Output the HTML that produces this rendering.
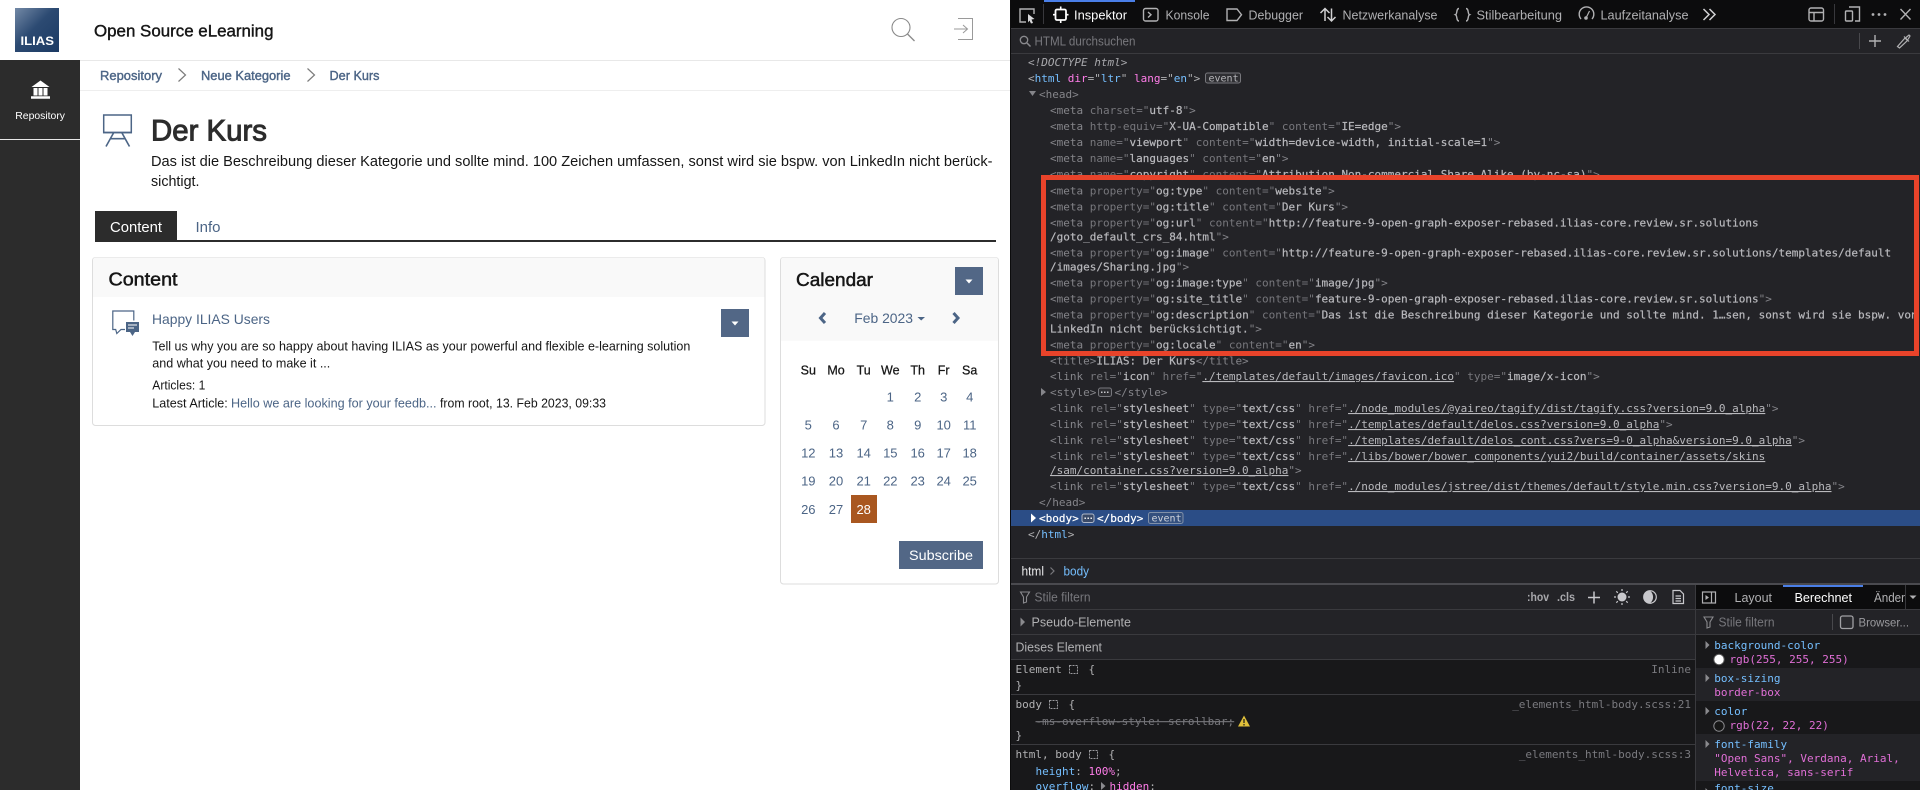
<!DOCTYPE html>
<html lang="en"><head><meta charset="utf-8"><title>ILIAS: Der Kurs</title>
<style>
html,body{margin:0;padding:0;width:1920px;height:790px;overflow:hidden;background:#fff}
svg{display:block;position:absolute;left:0;top:0}
text{font-family:"Liberation Sans",sans-serif;white-space:pre}
.s{fill:#161616}
.sb{stroke-width:.4;stroke:currentColor}
.l{fill:#4c6586}
.m{font-family:"DejaVu Sans Mono","Liberation Mono",monospace;font-size:11px;fill:#85858a}
.t{fill:#85858a}.a{fill:#77777c}.v{fill:#b9b9bd;stroke:#b9b9bd;stroke-width:.2}.u{fill:#b9b9bd;text-decoration:underline}
.blue{fill:#75bfff}.pink{fill:#ff7de9}.pk{fill:#e06fd6}.w{fill:#e8e8ea}.g{fill:#b1b1b3}.gd{fill:#7a7a7f}
.ui{font-size:12.5px;fill:#b1b1b3}
.d{font-size:13px;fill:#4c6586;text-anchor:middle}
.h{font-size:12.5px;fill:#161616;text-anchor:middle;stroke:#161616;stroke-width:.25}
.ic{fill:none;stroke:#b1b1b3;stroke-width:1.4}
</style></head>
<body>
<svg width="1920" height="790" viewBox="0 0 1920 790" xmlns="http://www.w3.org/2000/svg">
<defs><linearGradient id="lg" x1="0" y1="0" x2="1" y2="1"><stop offset="0" stop-color="#7389a6"/><stop offset=".45" stop-color="#2c4a72"/><stop offset="1" stop-color="#1b3a63"/></linearGradient></defs>
<rect width="1920" height="790" fill="#fff"/>

<!-- Header -->
<rect x="15" y="8" width="44" height="44" fill="url(#lg)"/>
<text x="20.5" y="45" font-size="11.5" font-weight="700" fill="#fff" textLength="33.5" lengthAdjust="spacingAndGlyphs">ILIAS</text>
<text x="94" y="36.5" font-size="16.5" class="s sb" color="#161616" textLength="179.5" lengthAdjust="spacingAndGlyphs">Open Source eLearning</text>
<circle cx="901" cy="27.5" r="9" fill="none" stroke="#8a8a8a" stroke-width="1.1"/>
<path d="M907.5 34 L914.5 41" fill="none" stroke="#8a8a8a" stroke-width="1.3"/>
<path d="M958 18.5 H972.5 V39.5 H958 M954 29 H967 M963 25 L967.5 29 L963 33" fill="none" stroke="#9a9a9a" stroke-width="1"/>
<rect x="0" y="60" width="1010" height="1" fill="#e8e8e8"/>
<rect x="80" y="90" width="930" height="1" fill="#eeeeee"/>

<!-- Sidebar -->
<rect x="0" y="60" width="80" height="730" fill="#2c2c2c"/>
<rect x="0" y="139" width="80" height="1" fill="#e8e8e8"/>
<path d="M31.5 87 L40.5 80.5 L49.5 87 Z" fill="#fff"/>
<path d="M33.5 88 h4 v7.5 h-4z M38.5 88 h4 v7.5 h-4z M43.5 88 h4 v7.5 h-4z M31 96.3 h19 v2.4 h-19z" fill="#fff"/>
<text x="15.3" y="119" font-size="10.5" fill="#fff" textLength="49.7" lengthAdjust="spacingAndGlyphs">Repository</text>

<!-- Breadcrumb -->
<text x="100" y="80" font-size="13" class="l sb" color="#4c6586" textLength="62" lengthAdjust="spacingAndGlyphs">Repository</text>
<path d="M178.5 68.5 L185.5 75 L178.5 81.5" fill="none" stroke="#7c7c7c" stroke-width="1.2"/>
<text x="201" y="80" font-size="13" class="l sb" color="#4c6586" textLength="89.5" lengthAdjust="spacingAndGlyphs">Neue Kategorie</text>
<path d="M307.5 68.5 L314.5 75 L307.5 81.5" fill="none" stroke="#7c7c7c" stroke-width="1.2"/>
<text x="329.5" y="80" font-size="13" class="l sb" color="#4c6586" textLength="50" lengthAdjust="spacingAndGlyphs">Der Kurs</text>

<!-- Title -->
<path d="M103.7 115 H131.3 V132.5 H103.7 Z" fill="none" stroke="#4c6586" stroke-width="1.5"/>
<path d="M103 132.6 H132 M113.5 133 L106 146.5 M122 133 L129.5 146.5 M110 138.7 H125.5" fill="none" stroke="#4c6586" stroke-width="1.6"/>
<text x="151" y="140.5" font-size="30" fill="#2c2c2c" stroke="#2c2c2c" stroke-width="1" textLength="116" lengthAdjust="spacingAndGlyphs">Der Kurs</text>
<text x="151" y="166" font-size="14.5" class="s" textLength="841.5" lengthAdjust="spacingAndGlyphs">Das ist die Beschreibung dieser Kategorie und sollte mind. 100 Zeichen umfassen, sonst wird sie bspw. von LinkedIn nicht berück-</text>
<text x="151" y="186" font-size="14.5" class="s" textLength="48.5" lengthAdjust="spacingAndGlyphs">sichtigt.</text>

<!-- Tabs -->
<rect x="95" y="211" width="82" height="30" fill="#2c2c2c"/>
<rect x="95" y="240" width="901" height="2" fill="#2c2c2c"/>
<text x="110" y="232" font-size="14.5" fill="#fff" textLength="52" lengthAdjust="spacingAndGlyphs">Content</text>
<text x="195.5" y="232" font-size="14.5" class="l" textLength="25" lengthAdjust="spacingAndGlyphs">Info</text>

<!-- Content panel -->
<rect x="92.5" y="257.5" width="672.5" height="168" rx="3" fill="#fff" stroke="#dddddd"/>
<path d="M93 297 V260 a2.5 2.5 0 0 1 2.5 -2.5 H762 a2.5 2.5 0 0 1 2.5 2.5 V297 Z" fill="#f9f9f9"/>
<text x="108.5" y="285.5" font-size="18" class="s sb" color="#161616" style="stroke-width:.5" textLength="69" lengthAdjust="spacingAndGlyphs">Content</text>
<path d="M133.8 320.5 V311 H112.8 V329.5 H115.7 L116.8 333.5 L121 329.5 H125" fill="none" stroke="#4c6586" stroke-width="1.2"/>
<path d="M126 322 H139 V332 H135 L132.5 336 L130 332 H126 Z" fill="#4c6586"/>
<path d="M128 325 H137 M128 328 H134" stroke="#fff" stroke-width="1"/>
<text x="152" y="324" font-size="14" class="l" textLength="118" lengthAdjust="spacingAndGlyphs">Happy ILIAS Users</text>
<rect x="721" y="309" width="28" height="28" fill="#526786"/>
<path d="M731.5 321.5 H738.5 L735 325.5 Z" fill="#fff"/>
<text x="152.3" y="350.5" font-size="12.5" class="s" textLength="538" lengthAdjust="spacingAndGlyphs">Tell us why you are so happy about having ILIAS as your powerful and flexible e-learning solution</text>
<text x="152.3" y="367.5" font-size="12.5" class="s" textLength="178" lengthAdjust="spacingAndGlyphs">and what you need to make it ...</text>
<text x="152.3" y="389.5" font-size="12.5" class="s" textLength="53" lengthAdjust="spacingAndGlyphs">Articles: 1</text>
<text x="152.3" y="407.5" font-size="12.5" class="s" textLength="75.5" lengthAdjust="spacingAndGlyphs">Latest Article:</text>
<text x="231" y="407.5" font-size="12.5" class="l" textLength="205.5" lengthAdjust="spacingAndGlyphs">Hello we are looking for your feedb...</text>
<text x="440" y="407.5" font-size="12.5" class="s" textLength="166" lengthAdjust="spacingAndGlyphs">from root, 13. Feb 2023, 09:33</text>

<!-- Calendar panel -->
<rect x="780.5" y="257.5" width="218" height="326.5" rx="3" fill="#fff" stroke="#dddddd"/>
<path d="M781 340.7 V260 a2.5 2.5 0 0 1 2.5 -2.5 H995.5 a2.5 2.5 0 0 1 2.5 2.5 V340.7 Z" fill="#f9f9f9"/>
<text x="796" y="286" font-size="18" class="s sb" color="#161616" style="stroke-width:.5" textLength="77" lengthAdjust="spacingAndGlyphs">Calendar</text>
<rect x="955" y="267" width="28" height="28" fill="#526786"/>
<path d="M965.5 279.5 H972.5 L969 283.5 Z" fill="#fff"/>
<path d="M825 313 L820.5 318 L825 323" fill="none" stroke="#4c6586" stroke-width="3"/>
<text x="854.3" y="323" font-size="14" class="l" textLength="58.7" lengthAdjust="spacingAndGlyphs">Feb 2023</text>
<path d="M917.5 317 H925 L921.2 320.5 Z" fill="#4c6586"/>
<path d="M953.5 313 L958 318 L953.5 323" fill="none" stroke="#4c6586" stroke-width="3"/>
<g>
<text class="h" x="808.3" y="374.5">Su</text><text class="h" x="836" y="374.5">Mo</text><text class="h" x="863.7" y="374.5">Tu</text><text class="h" x="890.3" y="374.5">We</text><text class="h" x="917.7" y="374.5">Th</text><text class="h" x="943.7" y="374.5">Fr</text><text class="h" x="969.7" y="374.5">Sa</text>
<text class="d" x="890.3" y="401.5">1</text><text class="d" x="917.7" y="401.5">2</text><text class="d" x="943.7" y="401.5">3</text><text class="d" x="969.7" y="401.5">4</text>
<text class="d" x="808.3" y="429.5">5</text><text class="d" x="836" y="429.5">6</text><text class="d" x="863.7" y="429.5">7</text><text class="d" x="890.3" y="429.5">8</text><text class="d" x="917.7" y="429.5">9</text><text class="d" x="943.7" y="429.5">10</text><text class="d" x="969.7" y="429.5">11</text>
<text class="d" x="808.3" y="457.5">12</text><text class="d" x="836" y="457.5">13</text><text class="d" x="863.7" y="457.5">14</text><text class="d" x="890.3" y="457.5">15</text><text class="d" x="917.7" y="457.5">16</text><text class="d" x="943.7" y="457.5">17</text><text class="d" x="969.7" y="457.5">18</text>
<text class="d" x="808.3" y="485.5">19</text><text class="d" x="836" y="485.5">20</text><text class="d" x="863.7" y="485.5">21</text><text class="d" x="890.3" y="485.5">22</text><text class="d" x="917.7" y="485.5">23</text><text class="d" x="943.7" y="485.5">24</text><text class="d" x="969.7" y="485.5">25</text>
<text class="d" x="808.3" y="514">26</text><text class="d" x="836" y="514">27</text>
<rect x="851" y="495" width="26" height="28" fill="#a95720"/>
<text class="d" x="863.7" y="514" style="fill:#fff">28</text>
</g>
<rect x="899" y="541" width="84" height="28" fill="#526786"/>
<text x="909" y="560" font-size="14" fill="#fff" textLength="64" lengthAdjust="spacingAndGlyphs">Subscribe</text>

<!-- Devtools base -->
<rect x="1010" y="0" width="910" height="790" fill="#232327"/>
<rect x="1010" y="0" width="1" height="790" fill="#0c0c0d"/>
<rect x="1011" y="0" width="909" height="28" fill="#0c0c0d"/>
<rect x="1011" y="28" width="909" height="1" fill="#3a3a3e"/>
<rect x="1044" y="0" width="91" height="2" fill="#4a7fe8"/>
<rect x="1043" y="4" width="1" height="20" fill="#38383c"/>

<!-- Toolbar icons -->
<path d="M1026 22 H1020 V9 H1034 V14" class="ic" stroke-width="1.6"/>
<path d="M1028 14 L1034.5 19 L1031.5 19.5 L1033 23 L1031 23.5 L1029.5 20.5 L1028 22.5 Z" fill="#d8d8da"/>
<rect x="1055.5" y="9.5" width="10.5" height="10.5" rx="1.5" fill="none" stroke="#fff" stroke-width="1.8"/>
<path d="M1060.7 6.5 V9 M1060.7 20.5 V23 M1053 14.7 H1055.5 M1066 14.7 H1068.5" stroke="#fff" stroke-width="1.6"/>
<text x="1074" y="19.5" class="ui" style="fill:#fff" textLength="53" lengthAdjust="spacingAndGlyphs">Inspektor</text>
<rect x="1143.5" y="8.5" width="14.5" height="12.5" rx="2" class="ic"/>
<path d="M1148 12 L1151 14.8 L1148 17.5" class="ic" stroke-width="1.1"/>
<text x="1165.5" y="19.5" class="ui" textLength="44" lengthAdjust="spacingAndGlyphs">Konsole</text>
<path d="M1227 9 H1237 L1241.5 14.7 L1237 20.5 H1227 Z" class="ic"/>
<text x="1248.5" y="19.5" class="ui" textLength="54.5" lengthAdjust="spacingAndGlyphs">Debugger</text>
<path d="M1325 21 V8.5 M1320.5 13 L1325 8.5 L1329.5 13 M1331.5 8.5 V21 M1327.5 17 L1331.5 21 L1335.5 17" fill="none" stroke="#d0d0d2" stroke-width="1.5"/>
<text x="1342.5" y="19.5" class="ui" textLength="95" lengthAdjust="spacingAndGlyphs">Netzwerkanalyse</text>
<path d="M1459 8.5 C1456 8.5 1457.5 14 1455.5 14.7 C1457.5 15.5 1456 21 1459 21 M1466 8.5 C1469 8.5 1467.5 14 1469.5 14.7 C1467.5 15.5 1469 21 1466 21" class="ic"/>
<text x="1476.5" y="19.5" class="ui" textLength="85.5" lengthAdjust="spacingAndGlyphs">Stilbearbeitung</text>
<path d="M1581 19 A7.3 7.3 0 1 1 1592 19" class="ic"/>
<circle cx="1586" cy="18" r="1.8" fill="#b1b1b3"/><path d="M1586 18 L1589.5 11" stroke="#b1b1b3" stroke-width="1.2"/>
<text x="1600.5" y="19.5" class="ui" textLength="88" lengthAdjust="spacingAndGlyphs">Laufzeitanalyse</text>
<path d="M1703.5 9 L1709 14.5 L1703.5 20 M1709.5 9 L1715 14.5 L1709.5 20" fill="none" stroke="#d0d0d2" stroke-width="1.5"/>
<rect x="1809" y="8" width="14.5" height="13" rx="2" class="ic"/>
<path d="M1809 12.5 H1823.5 M1814 12.5 V21" class="ic" stroke-width="1.1"/>
<rect x="1834" y="4" width="1" height="20" fill="#38383c"/>
<rect x="1845.5" y="11" width="7" height="10" rx="1" class="ic"/>
<path d="M1849 7 H1859.5 V21 H1855" class="ic"/>
<circle cx="1873" cy="14.5" r="1.4" fill="#b1b1b3"/><circle cx="1879" cy="14.5" r="1.4" fill="#b1b1b3"/><circle cx="1885" cy="14.5" r="1.4" fill="#b1b1b3"/>
<path d="M1900.5 9 L1910.5 19.5 M1910.5 9 L1900.5 19.5" class="ic"/>

<!-- Search row -->
<circle cx="1024" cy="40" r="3.7" fill="none" stroke="#8a8a8e" stroke-width="1.3"/><path d="M1027 43 L1030.5 46.5" stroke="#8a8a8e" stroke-width="1.5"/>
<text x="1034.5" y="45.5" class="ui" style="fill:#77777c" textLength="101" lengthAdjust="spacingAndGlyphs">HTML durchsuchen</text>
<rect x="1859" y="33" width="1" height="16" fill="#48484c"/>
<path d="M1869 41 H1881 M1875 35 V47" stroke="#b1b1b3" stroke-width="1.4"/>
<path d="M1897.5 46.5 L1905 38 L1907.5 40.5 L1899.5 48 Z M1904 36.5 L1909 41.5 M1906 37.5 L1909 35 L1910 36 L1908 39.5" fill="none" stroke="#b1b1b3" stroke-width="1.2"/>
<rect x="1011" y="53" width="909" height="1" fill="#3a3a3e"/>

<!-- Markup -->
<text class="m" x="1028" y="66" style="fill:#a8a8ac;font-style:italic">&lt;!DOCTYPE html&gt;</text>
<text class="m" x="1028" y="82"><tspan class="g">&lt;</tspan><tspan class="blue">html</tspan> <tspan class="pink">dir</tspan><tspan class="g">=&quot;</tspan><tspan class="blue">ltr</tspan><tspan class="g">&quot;</tspan> <tspan class="pink">lang</tspan><tspan class="g">=&quot;</tspan><tspan class="blue">en</tspan><tspan class="g">&quot;&gt;</tspan></text>
<rect x="1205.5" y="73" width="35" height="10" rx="2" fill="#2e2e32" stroke="#77777c"/>
<text class="m" x="1208.5" y="81.5" style="font-size:10px;fill:#b9b9bd">event</text>
<path d="M1029 91 H1036 L1032.5 96 Z" fill="#85858a"/>
<text class="m" x="1039" y="98">&lt;head&gt;</text>

<text class="m" x="1050" y="114"><tspan class="t">&lt;meta </tspan><tspan class="a">charset=&quot;</tspan><tspan class="v">utf-8</tspan><tspan class="t">&quot;&gt;</tspan></text>
<text class="m" x="1050" y="130"><tspan class="t">&lt;meta </tspan><tspan class="a">http-equiv=&quot;</tspan><tspan class="v">X-UA-Compatible</tspan><tspan class="a">&quot; content=&quot;</tspan><tspan class="v">IE=edge</tspan><tspan class="t">&quot;&gt;</tspan></text>
<text class="m" x="1050" y="146"><tspan class="t">&lt;meta </tspan><tspan class="a">name=&quot;</tspan><tspan class="v">viewport</tspan><tspan class="a">&quot; content=&quot;</tspan><tspan class="v">width=device-width, initial-scale=1</tspan><tspan class="t">&quot;&gt;</tspan></text>
<text class="m" x="1050" y="162"><tspan class="t">&lt;meta </tspan><tspan class="a">name=&quot;</tspan><tspan class="v">languages</tspan><tspan class="a">&quot; content=&quot;</tspan><tspan class="v">en</tspan><tspan class="t">&quot;&gt;</tspan></text>
<text class="m" x="1050" y="178"><tspan class="t">&lt;meta </tspan><tspan class="a">name=&quot;</tspan><tspan class="v">copyright</tspan><tspan class="a">&quot; content=&quot;</tspan><tspan class="v">Attribution Non-commercial Share Alike (by-nc-sa)</tspan><tspan class="t">&quot;&gt;</tspan></text>

<text class="m" x="1050" y="194.3"><tspan class="t">&lt;meta </tspan><tspan class="a">property=&quot;</tspan><tspan class="v">og:type</tspan><tspan class="a">&quot; content=&quot;</tspan><tspan class="v">website</tspan><tspan class="t">&quot;&gt;</tspan></text>
<text class="m" x="1050" y="210.3"><tspan class="t">&lt;meta </tspan><tspan class="a">property=&quot;</tspan><tspan class="v">og:title</tspan><tspan class="a">&quot; content=&quot;</tspan><tspan class="v">Der Kurs</tspan><tspan class="t">&quot;&gt;</tspan></text>
<text class="m" x="1050" y="226.3"><tspan class="t">&lt;meta </tspan><tspan class="a">property=&quot;</tspan><tspan class="v">og:url</tspan><tspan class="a">&quot; content=&quot;</tspan><tspan class="v">http://feature-9-open-graph-exposer-rebased.ilias-core.review.sr.solutions</tspan></text>
<text class="m" x="1050" y="240.3"><tspan class="v">/goto_default_crs_84.html</tspan><tspan class="t">&quot;&gt;</tspan></text>
<text class="m" x="1050" y="256.3"><tspan class="t">&lt;meta </tspan><tspan class="a">property=&quot;</tspan><tspan class="v">og:image</tspan><tspan class="a">&quot; content=&quot;</tspan><tspan class="v">http://feature-9-open-graph-exposer-rebased.ilias-core.review.sr.solutions/templates/default</tspan></text>
<text class="m" x="1050" y="270.3"><tspan class="v">/images/Sharing.jpg</tspan><tspan class="t">&quot;&gt;</tspan></text>
<text class="m" x="1050" y="286.3"><tspan class="t">&lt;meta </tspan><tspan class="a">property=&quot;</tspan><tspan class="v">og:image:type</tspan><tspan class="a">&quot; content=&quot;</tspan><tspan class="v">image/jpg</tspan><tspan class="t">&quot;&gt;</tspan></text>
<text class="m" x="1050" y="302.3"><tspan class="t">&lt;meta </tspan><tspan class="a">property=&quot;</tspan><tspan class="v">og:site_title</tspan><tspan class="a">&quot; content=&quot;</tspan><tspan class="v">feature-9-open-graph-exposer-rebased.ilias-core.review.sr.solutions</tspan><tspan class="t">&quot;&gt;</tspan></text>
<text class="m" x="1050" y="318.3"><tspan class="t">&lt;meta </tspan><tspan class="a">property=&quot;</tspan><tspan class="v">og:description</tspan><tspan class="a">&quot; content=&quot;</tspan><tspan class="v">Das ist die Beschreibung dieser Kategorie und sollte mind. 1…sen, sonst wird sie bspw. von</tspan></text>
<text class="m" x="1050" y="332.3"><tspan class="v">LinkedIn nicht berücksichtigt.</tspan><tspan class="t">&quot;&gt;</tspan></text>
<text class="m" x="1050" y="348.3"><tspan class="t">&lt;meta </tspan><tspan class="a">property=&quot;</tspan><tspan class="v">og:locale</tspan><tspan class="a">&quot; content=&quot;</tspan><tspan class="v">en</tspan><tspan class="t">&quot;&gt;</tspan></text>
<text class="m" x="1050" y="364.3"><tspan class="t">&lt;title&gt;</tspan><tspan class="v">ILIAS: Der Kurs</tspan><tspan class="t">&lt;/title&gt;</tspan></text>
<text class="m" x="1050" y="380"><tspan class="t">&lt;link </tspan><tspan class="a">rel=&quot;</tspan><tspan class="v">icon</tspan><tspan class="a">&quot; href=&quot;</tspan><tspan class="u">./templates/default/images/favicon.ico</tspan><tspan class="a">&quot; type=&quot;</tspan><tspan class="v">image/x-icon</tspan><tspan class="t">&quot;&gt;</tspan></text>
<path d="M1041 388 L1046 392 L1041 396 Z" fill="#85858a"/>
<text class="m" x="1050" y="396"><tspan class="t">&lt;style&gt;</tspan></text>
<rect x="1098.5" y="388" width="13" height="8.5" rx="2" fill="#2e2e32" stroke="#77777c"/>
<path d="M1101 392.2 h1.5 M1104 392.2 h1.5 M1107 392.2 h1.5" stroke="#c8c8cc" stroke-width="1.5"/>
<text class="m" x="1114.5" y="396"><tspan class="t">&lt;/style&gt;</tspan></text>
<text class="m" x="1050" y="412"><tspan class="t">&lt;link </tspan><tspan class="a">rel=&quot;</tspan><tspan class="v">stylesheet</tspan><tspan class="a">&quot; type=&quot;</tspan><tspan class="v">text/css</tspan><tspan class="a">&quot; href=&quot;</tspan><tspan class="u">./node_modules/@yaireo/tagify/dist/tagify.css?version=9.0_alpha</tspan><tspan class="t">&quot;&gt;</tspan></text>
<text class="m" x="1050" y="428"><tspan class="t">&lt;link </tspan><tspan class="a">rel=&quot;</tspan><tspan class="v">stylesheet</tspan><tspan class="a">&quot; type=&quot;</tspan><tspan class="v">text/css</tspan><tspan class="a">&quot; href=&quot;</tspan><tspan class="u">./templates/default/delos.css?version=9.0_alpha</tspan><tspan class="t">&quot;&gt;</tspan></text>
<text class="m" x="1050" y="444"><tspan class="t">&lt;link </tspan><tspan class="a">rel=&quot;</tspan><tspan class="v">stylesheet</tspan><tspan class="a">&quot; type=&quot;</tspan><tspan class="v">text/css</tspan><tspan class="a">&quot; href=&quot;</tspan><tspan class="u">./templates/default/delos_cont.css?vers=9-0_alpha&amp;version=9.0_alpha</tspan><tspan class="t">&quot;&gt;</tspan></text>
<text class="m" x="1050" y="460"><tspan class="t">&lt;link </tspan><tspan class="a">rel=&quot;</tspan><tspan class="v">stylesheet</tspan><tspan class="a">&quot; type=&quot;</tspan><tspan class="v">text/css</tspan><tspan class="a">&quot; href=&quot;</tspan><tspan class="u">./libs/bower/bower_components/yui2/build/container/assets/skins</tspan></text>
<text class="m" x="1050" y="474"><tspan class="u">/sam/container.css?version=9.0_alpha</tspan><tspan class="t">&quot;&gt;</tspan></text>
<text class="m" x="1050" y="490"><tspan class="t">&lt;link </tspan><tspan class="a">rel=&quot;</tspan><tspan class="v">stylesheet</tspan><tspan class="a">&quot; type=&quot;</tspan><tspan class="v">text/css</tspan><tspan class="a">&quot; href=&quot;</tspan><tspan class="u">./node_modules/jstree/dist/themes/default/style.min.css?version=9.0_alpha</tspan><tspan class="t">&quot;&gt;</tspan></text>
<text class="m" x="1039" y="506">&lt;/head&gt;</text>
<rect x="1011" y="510" width="909" height="16" fill="#2b4d86"/>
<path d="M1031 513.5 L1036 518 L1031 522.5 Z" fill="#fff"/>
<text class="m" x="1039" y="522" style="fill:#fff;stroke:#fff;stroke-width:.2">&lt;body&gt;</text>
<rect x="1082" y="514" width="12" height="8.5" rx="2" fill="#3a4a68" stroke="#b0b8c8"/>
<path d="M1084.5 518.2 h1.4 M1087.5 518.2 h1.4 M1090.5 518.2 h1.4" stroke="#fff" stroke-width="1.5"/>
<text class="m" x="1097" y="522" style="fill:#fff;stroke:#fff;stroke-width:.2">&lt;/body&gt;</text>
<rect x="1148.5" y="512.5" width="34.5" height="11" rx="2" fill="#34507e" stroke="#8090a8"/>
<text class="m" x="1151.5" y="521.5" style="font-size:10px;fill:#d0d4dc">event</text>
<text class="m" x="1028" y="538"><tspan class="g">&lt;/</tspan><tspan class="blue">html</tspan><tspan class="g">&gt;</tspan></text>

<!-- Red box -->
<rect x="1043.5" y="177.5" width="873" height="176" fill="none" stroke="#e8432a" stroke-width="5"/>

<!-- Breadcrumbs devtools -->
<rect x="1011" y="558" width="909" height="1" fill="#3a3a3e"/>
<text x="1021.5" y="575.5" class="ui" style="fill:#e8e8ea" textLength="22.5" lengthAdjust="spacingAndGlyphs">html</text>
<path d="M1050.5 567.5 L1054 571 L1050.5 574.5" fill="none" stroke="#77777c" stroke-width="1.2"/>
<text x="1063.5" y="575.5" class="ui" style="fill:#75bfff" textLength="25.5" lengthAdjust="spacingAndGlyphs">body</text>
<rect x="1011" y="583" width="909" height="2" fill="#4a4a4f"/>

<!-- Lower-left pane -->
<rect x="1011" y="659" width="684" height="131" fill="#18181a"/>
<rect x="1011" y="609" width="684" height="1" fill="#3a3a3e"/>
<rect x="1011" y="634" width="684" height="1" fill="#3a3a3e"/>
<rect x="1011" y="659" width="684" height="1" fill="#3a3a3e"/>
<rect x="1011" y="694" width="684" height="1" fill="#3a3a3e"/>
<rect x="1011" y="744" width="684" height="1" fill="#3a3a3e"/>
<path d="M1020.5 592 H1029.5 L1026.5 597 V602 L1023.5 603 V597 Z" fill="none" stroke="#8a8a8e" stroke-width="1.1"/>
<text x="1034.5" y="601.5" class="ui" style="fill:#77777c" textLength="56" lengthAdjust="spacingAndGlyphs">Stile filtern</text>
<text x="1527" y="601" font-size="11.5" font-weight="700" fill="#a8a8ac" textLength="22" lengthAdjust="spacingAndGlyphs">:hov</text>
<text x="1557" y="601" font-size="11.5" font-weight="700" fill="#a8a8ac" textLength="18" lengthAdjust="spacingAndGlyphs">.cls</text>
<path d="M1588 597.5 H1600 M1594 591.5 V603.5" stroke="#c8c8cc" stroke-width="1.5"/>
<circle cx="1622" cy="597" r="4.5" fill="#c8c8cc"/>
<path d="M1622 589 V591 M1622 603 V605 M1614 597 H1616 M1628 597 H1630 M1616.3 591.3 L1617.8 592.8 M1626.2 601.2 L1627.7 602.7 M1616.3 602.7 L1617.8 601.2 M1626.2 592.8 L1627.7 591.3" stroke="#c8c8cc" stroke-width="1.2"/>
<circle cx="1650" cy="597" r="6.3" fill="none" stroke="#c8c8cc" stroke-width="1.2"/>
<path d="M1650 590.7 A6.3 6.3 0 0 0 1650 603.3 A8 8 0 0 0 1650 590.7 Z" fill="#c8c8cc"/>
<path d="M1673 590.5 H1680 L1683.5 594 V603.5 H1673 Z M1675.5 596 H1681 M1675.5 598.5 H1681 M1675.5 601 H1681" fill="none" stroke="#c8c8cc" stroke-width="1.2"/>
<path d="M1020.5 617.5 L1025 622 L1020.5 626.5 Z" fill="#8a8a8e"/>
<text x="1031.5" y="626.5" class="ui" textLength="99.5" lengthAdjust="spacingAndGlyphs">Pseudo-Elemente</text>
<text x="1015.5" y="651.5" class="ui" textLength="86.5" lengthAdjust="spacingAndGlyphs">Dieses Element</text>

<text class="m" x="1015.5" y="673" style="fill:#b1b1b3">Element</text>
<path d="M1069.5 665.5 h8 v8 h-8 z" fill="none" stroke="#9a9a9e" stroke-dasharray="2 1"/>
<text class="m" x="1088.5" y="673" style="fill:#b1b1b3">{</text>
<text class="m" x="1015.5" y="689" style="fill:#b1b1b3">}</text>
<text class="m" x="1015.5" y="708" style="fill:#b1b1b3">body</text>
<path d="M1049.5 700.5 h8 v8 h-8 z" fill="none" stroke="#9a9a9e" stroke-dasharray="2 1"/>
<text class="m" x="1068.5" y="708" style="fill:#b1b1b3">{</text>
<text class="m" x="1035.5" y="725" style="fill:#77777c;text-decoration:line-through">-ms-overflow-style: scrollbar;</text>
<path d="M1244 715.5 L1250 726.5 H1238 Z" fill="#e0c03a"/>
<path d="M1244 719 V723 M1244 724 V725.5" stroke="#18181a" stroke-width="1.2"/>
<text class="m" x="1015.5" y="739" style="fill:#b1b1b3">}</text>
<text class="m" x="1015.5" y="758" style="fill:#b1b1b3">html, body</text>
<path d="M1089.5 750.5 h8 v8 h-8 z" fill="none" stroke="#9a9a9e" stroke-dasharray="2 1"/>
<text class="m" x="1108.5" y="758" style="fill:#b1b1b3">{</text>
<text class="m" x="1035.5" y="775"><tspan class="blue">height</tspan><tspan class="g">: </tspan><tspan class="pink">100%</tspan><tspan class="g">;</tspan></text>
<text class="m" x="1035.5" y="790"><tspan class="blue">overflow</tspan><tspan class="g">: </tspan></text>
<path d="M1101 782 L1105.5 786 L1101 790 Z" fill="#8a8a8e"/>
<text class="m" x="1109.5" y="790"><tspan class="pink">hidden</tspan><tspan class="g">;</tspan></text>
<text class="m" x="1691" y="673" text-anchor="end" style="fill:#7a7a7f">Inline</text>
<text class="m" x="1691" y="708" text-anchor="end" style="fill:#7a7a7f">_elements_html-body.scss:21</text>
<text class="m" x="1691" y="758" text-anchor="end" style="fill:#7a7a7f">_elements_html-body.scss:3</text>

<!-- Lower-right pane -->
<rect x="1695" y="585" width="225" height="205" fill="#232327"/>
<rect x="1695" y="585" width="1" height="205" fill="#3a3a3e"/>
<rect x="1696" y="585" width="224" height="24" fill="#0c0c0d"/>
<rect x="1783" y="585" width="80" height="2" fill="#4a7fe8"/>
<rect x="1702.5" y="592" width="13" height="11" fill="none" stroke="#b1b1b3" stroke-width="1.2"/>
<path d="M1711.5 592 V603" stroke="#b1b1b3" stroke-width="1.2"/>
<path d="M1705.5 595 L1709 597.5 L1705.5 600 Z" fill="#b1b1b3"/>
<text x="1734.5" y="602" class="ui" textLength="37.5" lengthAdjust="spacingAndGlyphs">Layout</text>
<text x="1794.5" y="602" class="ui" style="fill:#fff" textLength="57.5" lengthAdjust="spacingAndGlyphs">Berechnet</text>
<text x="1874" y="602" class="ui" textLength="31" lengthAdjust="spacingAndGlyphs">Änder</text>
<rect x="1905" y="585" width="1" height="24" fill="#38383c"/>
<path d="M1909.5 595.5 H1916.5 L1913 599 Z" fill="#b1b1b3"/>
<rect x="1696" y="609" width="224" height="1" fill="#3a3a3e"/>
<path d="M1704 617 H1713 L1710 622 V627 L1707 628 V622 Z" fill="none" stroke="#8a8a8e" stroke-width="1.1"/>
<text x="1718.5" y="626.5" class="ui" style="fill:#77777c" textLength="56" lengthAdjust="spacingAndGlyphs">Stile filtern</text>
<rect x="1832" y="614" width="1" height="16" fill="#48484c"/>
<rect x="1840.5" y="616" width="12.5" height="12.5" rx="2" fill="#2a2a2e" stroke="#a0a0a4" stroke-width="1.3"/>
<text x="1858.5" y="626.5" font-size="12" fill="#9a9a9e" textLength="50.5" lengthAdjust="spacingAndGlyphs">Browser...</text>
<rect x="1696" y="634" width="224" height="1" fill="#3a3a3e"/>
<rect x="1696" y="635" width="224" height="33" fill="#18181a"/>
<rect x="1696" y="701" width="224" height="33" fill="#18181a"/>
<rect x="1696" y="781" width="224" height="9" fill="#18181a"/>
<path d="M1705.5 641 L1709.5 645 L1705.5 649 Z" fill="#8a8a8e"/>
<text class="m" x="1714.3" y="649"><tspan class="blue">background-color</tspan></text>
<circle cx="1719" cy="659.5" r="5.2" fill="#fff" stroke="#555"/>
<text class="m" x="1729.5" y="663"><tspan class="pk">rgb(255, 255, 255)</tspan></text>
<path d="M1705.5 674 L1709.5 678 L1705.5 682 Z" fill="#8a8a8e"/>
<text class="m" x="1714.3" y="682"><tspan class="blue">box-sizing</tspan></text>
<text class="m" x="1714.3" y="696"><tspan class="pk">border-box</tspan></text>
<path d="M1705.5 707 L1709.5 711 L1705.5 715 Z" fill="#8a8a8e"/>
<text class="m" x="1714.3" y="715"><tspan class="blue">color</tspan></text>
<circle cx="1719" cy="726" r="5.2" fill="#161616" stroke="#8a8a8e"/>
<text class="m" x="1729.5" y="729"><tspan class="pk">rgb(22, 22, 22)</tspan></text>
<path d="M1705.5 740 L1709.5 744 L1705.5 748 Z" fill="#8a8a8e"/>
<text class="m" x="1714.3" y="748"><tspan class="blue">font-family</tspan></text>
<text class="m" x="1714.3" y="762"><tspan class="pk">&quot;Open Sans&quot;, Verdana, Arial,</tspan></text>
<text class="m" x="1714.3" y="776"><tspan class="pk">Helvetica, sans-serif</tspan></text>
<path d="M1705.5 788 L1709.5 792 L1705.5 796 Z" fill="#8a8a8e"/>
<text class="m" x="1714.3" y="792"><tspan class="blue">font-size</tspan></text>
</svg>
</body></html>
